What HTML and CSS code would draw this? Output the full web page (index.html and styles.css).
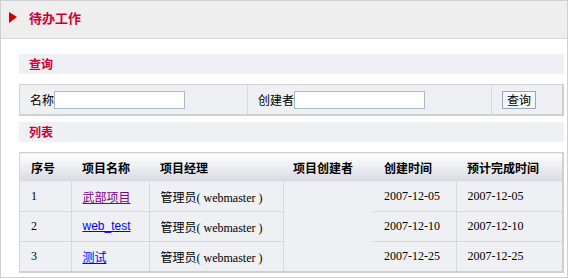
FILE: index.html
```html
<!DOCTYPE html>
<html lang="zh-CN">
<head>
    <meta charset="UTF-8">
    <title>待办工作</title>
    <link rel="stylesheet" href="styles.css">
</head>
<body>

<div class="page">
    <div class="title-bar">
        <span class="arrow"></span>
        <h1>待办工作</h1>
    </div>

    <div class="content">
        <div class="section-bar">查询</div>

        <form class="search">
            <div class="search-cell">
                <label>名称<input type="text" class="text-input"></label>
            </div>
            <div class="search-cell">
                <label>创建者<input type="text" class="text-input"></label>
            </div>
            <div class="search-cell last">
                <button type="button" class="btn">查询</button>
            </div>
        </form>

        <div class="section-bar list-bar">列表</div>

        <table class="list">
            <thead>
                <tr>
                    <th class="col-no">序号</th>
                    <th class="col-name">项目名称</th>
                    <th class="col-manager">项目经理</th>
                    <th class="col-creator">项目创建者</th>
                    <th class="col-date">创建时间</th>
                    <th>预计完成时间</th>
                </tr>
            </thead>
            <tbody>
                <tr>
                    <td>1</td>
                    <td><a href="#" class="visited">武部项目</a></td>
                    <td>管理员( webmaster )</td>
                    <td class="blank"></td>
                    <td>2007-12-05</td>
                    <td>2007-12-05</td>
                </tr>
                <tr>
                    <td>2</td>
                    <td><a href="#">web_test</a></td>
                    <td>管理员( webmaster )</td>
                    <td class="blank"></td>
                    <td>2007-12-10</td>
                    <td>2007-12-10</td>
                </tr>
                <tr>
                    <td>3</td>
                    <td><a href="#">测试</a></td>
                    <td>管理员( webmaster )</td>
                    <td class="blank"></td>
                    <td>2007-12-25</td>
                    <td>2007-12-25</td>
                </tr>
            </tbody>
        </table>
    </div>
</div>

</body>
</html>
```

FILE: styles.css
```css
body {
    margin: 0;
    padding: 0;
    background-color: #fff;
    font-family: "Liberation Serif", "Noto Sans CJK SC", serif;
    font-size: 12px;
    color: #000;
}

.page {
    box-sizing: border-box;
    width: 568px;
    height: 278px;
    border: 1px solid #cfcfcf;
}

.title-bar {
    display: flex;
    align-items: center;
    height: 38px;
    padding: 0 0 4px 8px;
    box-sizing: border-box;
    background-color: #eeeeee;
    border-bottom: 1px solid #d6d6d6;
}

.arrow {
    width: 0;
    height: 0;
    border-top: 5px solid transparent;
    border-bottom: 6px solid transparent;
    border-left: 8px solid #cc0000;
    margin-right: 12px;
}

.title-bar h1 {
    margin: 0;
    font-family: "Noto Sans CJK SC", sans-serif;
    font-size: 13px;
    font-weight: bold;
    color: #cc0033;
    line-height: 17px;
}

.content {
    padding: 15px 3px 0 18px;
}

.section-bar {
    height: 20px;
    line-height: 19px;
    padding-left: 10px;
    background-color: #eef0f3;
    font-family: "Noto Sans CJK SC", sans-serif;
    font-size: 12px;
    font-weight: bold;
    color: #cc0033;
}

.list-bar {
    margin-top: 6px;
}

.search {
    display: grid;
    grid-template-columns: 228px 244px 1fr;
    margin: 10px 0 0 0;
    background-color: #eef0f3;
    border-top: 1px solid #d2d2d2;
    border-left: 1px solid #d2d2d2;
    border-right: 2px solid #d0d0d0;
    border-bottom: 2px solid #d0d0d0;
}

.search-cell {
    display: flex;
    align-items: center;
    height: 29px;
    padding-left: 10px;
    border-right: 1px solid #d8d8d8;
    font-family: "Noto Sans CJK SC", sans-serif;
}

.search-cell.last {
    border-right: none;
}

.search-cell label {
    display: flex;
    align-items: center;
}

.text-input {
    box-sizing: border-box;
    width: 131px;
    height: 18px;
    margin: 0;
    padding: 0 2px;
    border: 1px solid #a6b9cc;
    background-color: #fff;
}

.btn {
    box-sizing: border-box;
    width: 34px;
    height: 18px;
    margin: 0;
    padding: 0;
    border: 1px solid #93a7bd;
    background-color: #f5f7f9;
    font-family: "Noto Sans CJK SC", sans-serif;
    font-size: 12px;
    line-height: 16px;
    color: #000;
}

.list {
    width: 545px;
    margin-top: 10px;
    border-collapse: collapse;
    border-top: 1px solid #cfcfcf;
    border-left: 1px solid #d4d4d4;
    border-right: 2px solid #d0d0d0;
    border-bottom: 2px solid #d0d0d0;
    background-color: #eef0f3;
}

.list th {
    height: 28px;
    padding: 0 0 0 11px;
    text-align: left;
    font-family: "Noto Sans CJK SC", sans-serif;
    font-size: 12px;
    font-weight: bold;
    background: linear-gradient(#ffffff, #d8dae2);
    border-bottom: 1px solid #e2ebe2;
}

.list .col-no { width: 40px; }
.list .col-name { width: 67px; }
.list .col-manager { width: 123px; }
.list .col-creator { width: 80px; padding-left: 10px; }
.list .col-date { width: 72px; }

.list td {
    height: 29px;
    padding: 0 0 0 11px;
    border-right: 1px solid #d8d8d8;
    border-bottom: 1px solid #d8d8d8;
    font-family: "Liberation Serif", "Noto Sans CJK SC", serif;
}

.list td.blank {
    border-right: none;
    border-bottom: none;
}

.list a {
    font-family: "Liberation Sans", "Noto Sans CJK SC", sans-serif;
    color: #0000ff;
    text-decoration: underline;
}

.list a.visited {
    color: #800080;
}
```
